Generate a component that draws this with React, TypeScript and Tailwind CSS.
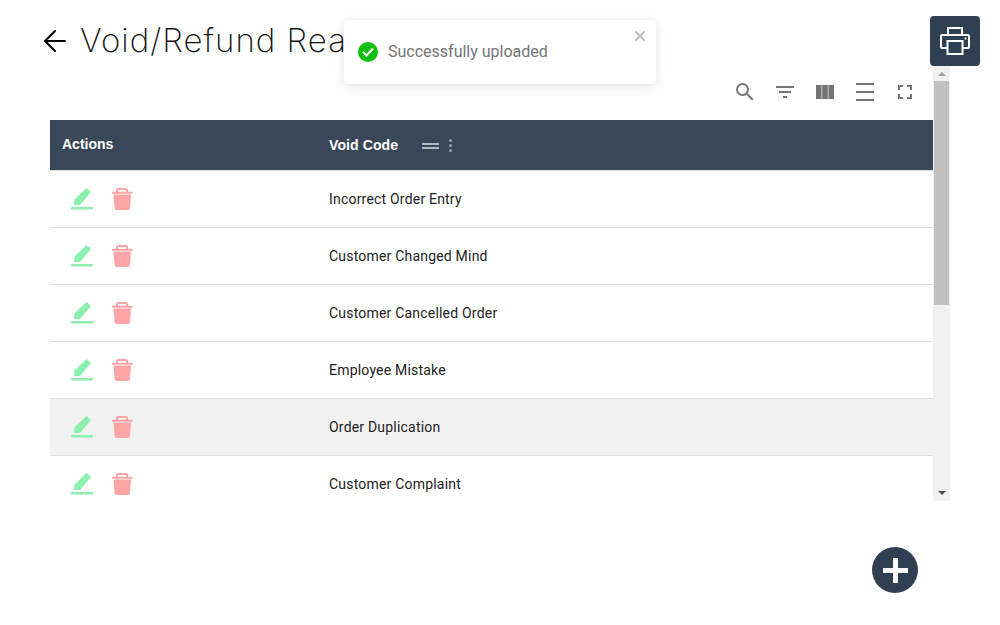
import { ArrowLeft, X } from 'lucide-react';

const reasons = [
  'Incorrect Order Entry',
  'Customer Changed Mind',
  'Customer Cancelled Order',
  'Employee Mistake',
  'Order Duplication',
  'Customer Complaint',
];

function EditIcon() {
  return (
    <svg width="24" height="24" viewBox="0 0 24 24" fill="#8bf0ad">
      <path d="M4 18 L4.5 12.5 L16.5 1 L21 5 L10 18 Z" />
      <rect x="1" y="20" width="22" height="2.5" rx="0.4" />
    </svg>
  );
}

function TrashIcon() {
  return (
    <svg width="24" height="24" viewBox="0 0 24 24" fill="#ffa5a5">
      <path
        fillRule="evenodd"
        d="M6 3 Q6 1 8 1 H16 Q18 1 18 3 V4.7 H22.6 V6.7 H2 V4.7 H6 Z M8 3 V4.7 H16 V3 Z"
      />
      <path d="M3.5 7.4 H21 L20 21 Q19.8 23 18 23 H6.6 Q4.8 23 4.6 21 Z" />
    </svg>
  );
}

function PrintIcon() {
  return (
    <svg width="30" height="28" viewBox="0 0 30 28" fill="none" stroke="white" strokeWidth="2">
      <path d="M8 8 V1 H22 V8" />
      <path d="M7 21 H2 Q1 21 1 20 V9 Q1 8 2 8 H28 Q29 8 29 9 V20 Q29 21 28 21 H23" />
      <rect x="7.5" y="14" width="15" height="13" />
      <rect x="24.5" y="10.5" width="2" height="2" fill="white" stroke="none" />
    </svg>
  );
}

function Toolbar() {
  return (
    <div className="flex h-[54px] items-start justify-end gap-[16px] pr-[16px] pt-[14px] text-[#757575]">
      <svg width="24" height="24" viewBox="0 0 24 24" fill="currentColor">
        <path d="M15.5 14h-.79l-.28-.27A6.47 6.47 0 0 0 16 9.5 6.5 6.5 0 1 0 9.5 16c1.61 0 3.09-.59 4.23-1.57l.27.28v.79l5 4.99L20.49 19l-4.99-5zm-6 0C7.01 14 5 11.99 5 9.5S7.01 5 9.5 5 14 7.01 14 9.5 11.99 14 9.5 14z" />
      </svg>
      <svg width="24" height="24" viewBox="0 0 24 24" fill="currentColor">
        <path d="M10 18h4v-2h-4v2zM3 6v2h18V6H3zm3 7h12v-2H6v2z" />
      </svg>
      <svg width="24" height="24" viewBox="0 0 24 24" fill="currentColor">
        <path d="M3 5h5.6v14H3zM9.2 5h5.6v14H9.2zM15.4 5H21v14h-5.6z" />
      </svg>
      <svg width="24" height="24" viewBox="0 0 24 24" fill="currentColor">
        <path d="M3 21h18v-2H3v2zM3 13h18v-2H3v2zM3 3v2h18V3H3z" />
      </svg>
      <svg width="24" height="24" viewBox="0 0 24 24" fill="currentColor">
        <path d="M7 14H5v5h5v-2H7v-3zm-2-4h2V7h3V5H5v5zm12 7h-3v2h5v-5h-2v3zM14 5v2h3v3h2V5h-5z" />
      </svg>
    </div>
  );
}

function ReasonTable() {
  return (
    <div>
      <div className="flex h-[51px] border-b border-[#e0e0e0] bg-[#3a4759] font-['Liberation_Sans',sans-serif] text-[14px] font-bold text-white">
        <div className="w-[279px] pl-[12px] pt-[14px]">Actions</div>
        <div className="flex items-center pt-[1px]">
          <span className="tracking-[0.1px]">Void Code</span>
          <span className="ml-[24px] flex flex-col gap-[2px]">
            <span className="h-[2px] w-[17px] bg-[#b4b9c0]" />
            <span className="h-[2px] w-[17px] bg-[#b4b9c0]" />
          </span>
          <span className="ml-[10px] flex flex-col gap-[2px]">
            <span className="size-[3px] rounded-full bg-[#9aa2ad]" />
            <span className="size-[3px] rounded-full bg-[#9aa2ad]" />
            <span className="size-[3px] rounded-full bg-[#9aa2ad]" />
          </span>
        </div>
      </div>
      {reasons.map((reason) => (
        <div
          key={reason}
          className={`flex h-[57px] items-center border-b border-[#e0e0e0] text-[14px] tracking-[0.2px] text-[#212121] ${reason === 'Order Duplication' ? 'bg-[#f2f2f2]' : ''}`}
        >
          <div className="flex w-[279px] items-center gap-[16px] pl-[20px]">
            <EditIcon />
            <TrashIcon />
          </div>
          <span>{reason}</span>
        </div>
      ))}
    </div>
  );
}

function Scrollbar() {
  return (
    <div className="flex w-[17px] shrink-0 flex-col items-center bg-[#f1f1f1]">
      <div className="flex h-[15px] w-full items-center justify-center">
        <span className="border-x-[4px] border-b-[4px] border-x-transparent border-b-[#a3a3a3]" />
      </div>
      <div className="h-[224px] w-[15px] bg-[#c1c1c1]" />
      <div className="flex-1" />
      <div className="flex h-[17px] w-full items-center justify-center">
        <span className="border-x-[4px] border-t-[4px] border-x-transparent border-t-[#505050]" />
      </div>
    </div>
  );
}

export default function App() {
  return (
    <div className="relative h-[625px] w-[1000px] overflow-hidden bg-white font-['Roboto',sans-serif]">
      <div className="flex h-[66px] items-center pl-[38px] pb-[4px] pt-[20px]">
        <ArrowLeft size={34} strokeWidth={1.5} className="text-black" />
        <h1 className="ml-[8px] font-['Inter',sans-serif] text-[33px] font-extralight tracking-[1px] text-[#111]">
          Void/Refund Reasons
        </h1>
      </div>

      <div className="ml-[50px] flex h-[435px] w-[900px]">
        <div className="min-w-0 flex-1 overflow-hidden">
          <Toolbar />
          <ReasonTable />
        </div>
        <Scrollbar />
      </div>

      <div className="absolute left-[344px] top-[20px] flex h-[64px] w-[312px] items-center rounded-[4px] bg-white pl-[14px] shadow-[0_2px_12px_rgba(0,0,0,0.12)]">
        <span className="flex size-[20px] items-center justify-center rounded-full bg-[#0fbf0f]">
          <svg width="12" height="10" viewBox="0 0 12 10" fill="none" stroke="white" strokeWidth="2">
            <path d="M1 5 L4.5 8.5 L11 1.5" />
          </svg>
        </span>
        <span className="ml-[10px] text-[16px] text-[#757575]">Successfully uploaded</span>
        <X size={16} strokeWidth={3} className="absolute right-[8px] top-[8px] text-[#bdbdbd]" />
      </div>

      <button className="absolute left-[930px] top-[16px] flex size-[50px] items-center justify-center rounded-[4px] bg-[#303f52]">
        <PrintIcon />
      </button>

      <button className="absolute left-[872px] top-[547px] flex size-[46px] items-center justify-center rounded-full bg-[#303f52]">
        <svg width="25" height="25" viewBox="0 0 25 25" fill="white">
          <path d="M10 0h5v10h10v5H15v10h-5V15H0v-5h10z" />
        </svg>
      </button>
    </div>
  );
}
